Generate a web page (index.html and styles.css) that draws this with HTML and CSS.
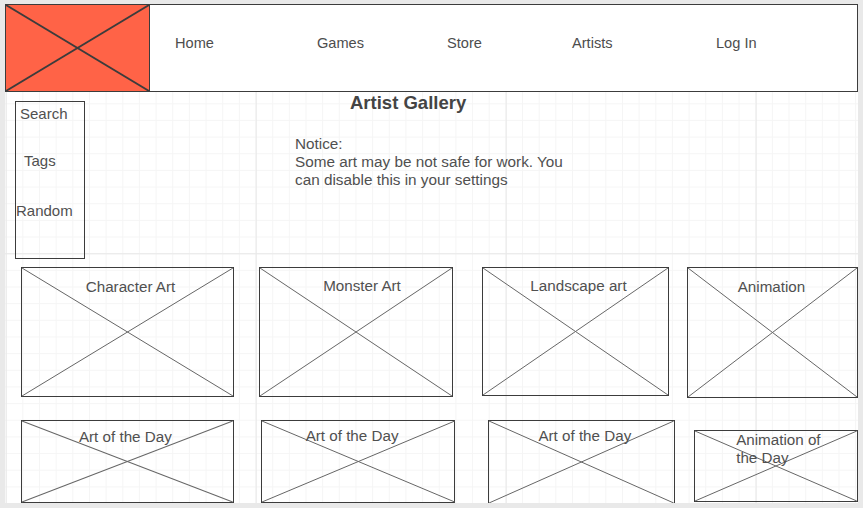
FILE: index.html
```html
<!DOCTYPE html>
<html>
<head>
<meta charset="utf-8">
<link rel="stylesheet" href="styles.css">
</head>
<body>
<div class="canvas">
  <header class="header">
    <div class="logo">
      <svg class="x" viewBox="0 0 100 100" preserveAspectRatio="none"><line x1="0" y1="0" x2="100" y2="100"/><line x1="100" y1="0" x2="0" y2="100"/></svg>
    </div>
    <nav class="nav">
      <span class="nav-item n1">Home</span>
      <span class="nav-item n2">Games</span>
      <span class="nav-item n3">Store</span>
      <span class="nav-item n4">Artists</span>
      <span class="nav-item n5">Log In</span>
    </nav>
  </header>

  <section class="top">
    <aside class="sidebar">
      <div class="side-item s1">Search</div>
      <div class="side-item s2">Tags</div>
      <div class="side-item s3">Random</div>
    </aside>
    <div class="intro">
      <h1 class="title">Artist Gallery</h1>
      <p class="notice">Notice:<br>Some art may be not safe for work. You<br>can disable this in your settings</p>
    </div>
  </section>

  <section class="row row1">
    <div class="card c1"><svg class="x" viewBox="0 0 100 100" preserveAspectRatio="none"><line x1="0" y1="0" x2="100" y2="100"/><line x1="100" y1="0" x2="0" y2="100"/></svg><span class="label">Character Art</span></div>
    <div class="card c2"><svg class="x" viewBox="0 0 100 100" preserveAspectRatio="none"><line x1="0" y1="0" x2="100" y2="100"/><line x1="100" y1="0" x2="0" y2="100"/></svg><span class="label">Monster Art</span></div>
    <div class="card c3"><svg class="x" viewBox="0 0 100 100" preserveAspectRatio="none"><line x1="0" y1="0" x2="100" y2="100"/><line x1="100" y1="0" x2="0" y2="100"/></svg><span class="label">Landscape art</span></div>
    <div class="card c4"><svg class="x" viewBox="0 0 100 100" preserveAspectRatio="none"><line x1="0" y1="0" x2="100" y2="100"/><line x1="100" y1="0" x2="0" y2="100"/></svg><span class="label">Animation</span></div>
  </section>

  <section class="row row2">
    <div class="card d1"><svg class="x" viewBox="0 0 100 100" preserveAspectRatio="none"><line x1="0" y1="0" x2="100" y2="100"/><line x1="100" y1="0" x2="0" y2="100"/></svg><span class="label">Art of the Day</span></div>
    <div class="card d2"><svg class="x" viewBox="0 0 100 100" preserveAspectRatio="none"><line x1="0" y1="0" x2="100" y2="100"/><line x1="100" y1="0" x2="0" y2="100"/></svg><span class="label">Art of the Day</span></div>
    <div class="card d3"><svg class="x" viewBox="0 0 100 100" preserveAspectRatio="none"><line x1="0" y1="0" x2="100" y2="100"/><line x1="100" y1="0" x2="0" y2="100"/></svg><span class="label">Art of the Day</span></div>
    <div class="card d4"><svg class="x" viewBox="0 0 100 100" preserveAspectRatio="none"><line x1="0" y1="0" x2="100" y2="100"/><line x1="100" y1="0" x2="0" y2="100"/></svg><span class="label">Animation of<br>the Day</span></div>
  </section>
</div>
</body>
</html>
```

FILE: styles.css
```css
* { box-sizing: border-box; }

html, body {
  margin: 0;
  padding: 0;
  background: #e9e9e9;
  width: 863px;
  height: 508px;
  overflow: hidden;
}

body {
  font-family: "Liberation Sans", Arial, sans-serif;
  font-size: 15px;
  color: #505050;
}

.canvas {
  margin: 4px 0 0 5px;
  width: 853px;
  height: 499px;
  overflow: hidden;
  background-color: #ffffff;
  background-image:
    linear-gradient(to right, #e8e8e8 1px, transparent 1px),
    linear-gradient(to bottom, #e8e8e8 1px, transparent 1px),
    linear-gradient(to right, #f5f5f5 1px, transparent 1px),
    linear-gradient(to bottom, #f5f5f5 1px, transparent 1px);
  background-size: 250px 250px, 250px 250px, 16.667px 16.667px, 16.667px 16.667px;
  background-position: 0.7px 0, 0 249.3px, 0.7px 0, 0 16px;
}

.x {
  position: absolute;
  left: 0;
  top: 0;
  width: 100%;
  height: 100%;
  overflow: visible;
}

.x line {
  stroke: #666666;
  stroke-width: 1;
  vector-effect: non-scaling-stroke;
}

/* header */
.header {
  display: flex;
  align-items: flex-start;
  height: 88px;
}

.logo {
  position: relative;
  width: 145px;
  height: 88px;
  background: #ff6347;
  border: 1.5px solid #3c3c3c;
}

.logo .x line {
  stroke: #3c3c3c;
  stroke-width: 2;
}

.nav {
  flex: 1;
  height: 88px;
  display: flex;
  align-items: center;
  padding-left: 25px;
  background: #ffffff;
  border: 1.5px solid #3c3c3c;
  border-left: none;
  padding-bottom: 10px;
}

.nav-item {
  display: block;
  font-size: 14.6px;
  color: #4d4d4d;
}

.n1 { width: 142px; }
.n2 { width: 130px; }
.n3 { width: 125px; }
.n4 { width: 144px; }

/* top section */
.top {
  display: flex;
  align-items: flex-start;
  height: 167px;
}

.sidebar {
  margin: 9px 0 0 10px;
  width: 70px;
  height: 158px;
  border: 1.3px solid #3c3c3c;
  background: transparent;
  padding-top: 3px;
}

.side-item {
  line-height: 18px;
  font-size: 15px;
}

.s1 { padding-left: 4px; }
.s2 { padding-left: 8px; margin-top: 29px; }
.s3 { padding-left: 0; margin-top: 32px; }

.intro {
  margin-left: 210px;
}

.title {
  margin: 0;
  padding: 1px 0 0 55px;
  font-size: 18.5px;
  line-height: 20px;
  font-weight: bold;
  color: #444444;
}

.notice {
  margin: 22px 0 0 0;
  font-size: 15.3px;
  line-height: 18px;
  color: #505050;
}

/* rows */
.row {
  display: flex;
  align-items: flex-start;
}

.row1 { margin-top: 8px; }
.row2 { margin-top: 22px; }

.card {
  position: relative;
  border: 1.3px solid #3c3c3c;
  text-align: center;
}

.label {
  position: relative;
  display: block;
  font-size: 15.2px;
  line-height: 18px;
  color: #505050;
}

.c1 { margin-left: 16px; width: 213px; height: 130px; padding-top: 10px; }
.c1 .label { padding-left: 6px; }
.c2 { margin-left: 25px; width: 194px; height: 130px; padding-top: 9px; }
.c2 .label { padding-left: 12px; }
.c3 { margin-left: 29px; width: 187px; height: 129px; padding-top: 9px; }
.c3 .label { padding-left: 6px; }
.c4 { margin-left: 18px; width: 171px; height: 131px; padding-top: 10px; }
.c4 .label { padding-right: 2px; }

.d1 { margin-left: 16px; width: 213px; height: 83px; padding-top: 7px; }
.d1 .label { padding-right: 4px; }
.d2 { margin-left: 27px; width: 195px; height: 83px; padding-top: 6px; }
.d2 .label { padding-right: 12px; }
.d3 { margin-left: 33px; width: 187px; height: 84px; padding-top: 6px; }
.d3 .label { padding-left: 6px; }
.d4 { margin-left: 19px; margin-top: 10px; width: 164px; height: 72px; padding: 0 0 0 41px; text-align: left; }
```
